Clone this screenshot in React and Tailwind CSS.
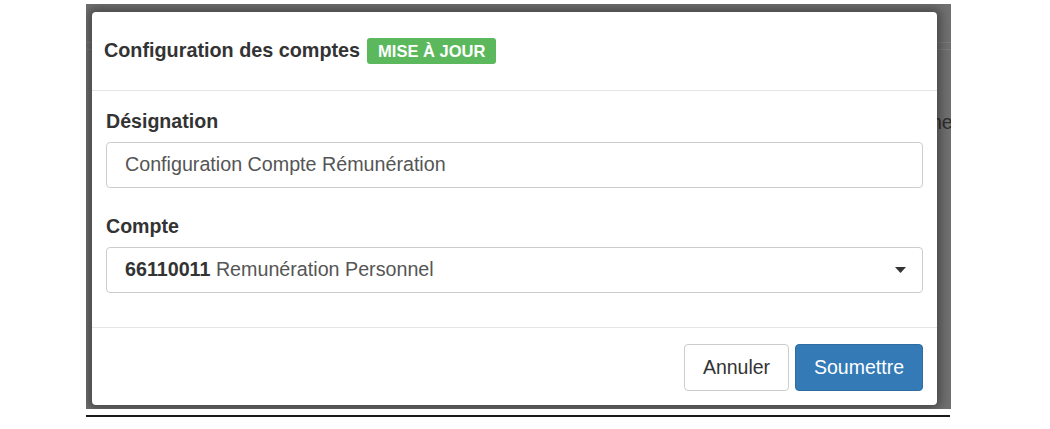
export default function App() {
  return (
    <div className="w-[1050px] h-[429px] bg-white font-['Liberation_Sans',Arial,sans-serif] overflow-hidden">
      {/* dimmed page behind the modal */}
      <div className="relative ml-[86px] mt-[4px] w-[865px] h-[405px] bg-[#707070] pl-[6px] pt-[8px] pr-[14px] pb-[4px] overflow-hidden">
        <div className="absolute left-0 right-0 top-[38px] h-px bg-[#7c7c7c]" />
        <div className="absolute left-0 right-0 top-[45px] h-px bg-[#7c7c7c]" />
        <span className="absolute left-[845px] top-[104px] text-[19.5px] text-[#2e2e2e]">ne</span>

        {/* modal */}
        <div className="relative h-full bg-white rounded-[4px] shadow-[0_0_10px_4px_rgba(0,0,0,0.35)] flex flex-col">
          <div className="h-[79px] border-b border-[#e5e5e5] flex items-center gap-[7px] pl-[12px]">
            <h4 className="text-[19.8px] font-bold text-[#333] leading-none">Configuration des comptes</h4>
            <span className="h-[26px] px-[11px] rounded-[3px] bg-[#5cb85c] text-white font-bold text-[16.5px] flex items-center leading-none">
              MISE À JOUR
            </span>
          </div>

          <div className="flex-1 px-[14px] pt-[16px] border-b border-[#e5e5e5]">
            <label className="block text-[19.6px] font-bold text-[#333] leading-[28px]">Désignation</label>
            <div className="mt-[7px] h-[46px] border border-[#ccc] rounded-[4px] flex items-center px-[18px] text-[19.7px] text-[#555]">
              Configuration Compte Rémunération
            </div>
            <label className="block mt-[24px] text-[19.6px] font-bold text-[#333] leading-[28px]">Compte</label>
            <div className="mt-[7px] h-[46px] border border-[#ccc] rounded-[4px] flex items-center justify-between pl-[18px] pr-[16px] text-[19.7px] text-[#555]">
              <span>
                <b className="text-[#333]">66110011</b> Remunération Personnel
              </span>
              <svg width="11" height="6" viewBox="0 0 11 6">
                <path d="M0 0 L11 0 L5.5 6 Z" fill="#333" />
              </svg>
            </div>
          </div>

          <div className="h-[77px] flex items-start justify-end gap-[6px] pt-[16px] pr-[14px]">
            <button className="h-[47px] w-[105px] border border-[#ccc] rounded-[4px] bg-white text-[#333] text-[19.5px]">
              Annuler
            </button>
            <button className="h-[47px] w-[128px] border border-[#2e6da4] rounded-[4px] bg-[#337ab7] text-white text-[19.5px]">
              Soumettre
            </button>
          </div>
        </div>
      </div>
      <div className="ml-[86px] mt-[6px] w-[864px] h-[2px] bg-[#1a1a1a]" />
    </div>
  );
}
